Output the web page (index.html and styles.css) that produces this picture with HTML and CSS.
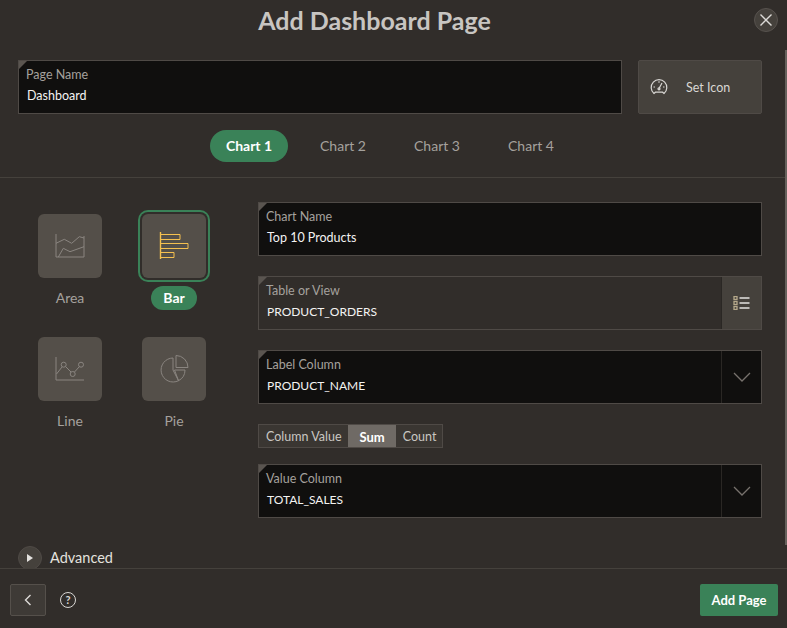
FILE: index.html
```html
<!DOCTYPE html>
<html lang="en">
<head>
  <meta charset="UTF-8" />
  <title>Add Dashboard Page</title>
  <meta name="viewport" content="width=device-width, initial-scale=1.0" />
  <link rel="stylesheet" href="styles.css">
</head>
<body>
  <div class="dialog">
    <header class="dialog-head">
      <h1>Add Dashboard Page</h1>
      <button class="close" type="button" aria-label="Close">
        <svg width="14" height="14" viewBox="0 0 14 14"><path d="M1.5 1.5l11 11M12.5 1.5l-11 11" /></svg>
      </button>
    </header>

    <div class="dialog-body">
      <div class="page-row">
        <div class="field grow">
          <label>Page Name</label>
          <div class="value">Dashboard</div>
        </div>
        <button class="set-icon" type="button">
          <svg width="18" height="18" viewBox="0 0 18 18">
            <path d="M4 15.5A7.8 7.8 0 1 1 14 15.5L12.6 14.2H5.4Z" />
            <path d="M9 10.5L12 5" />
            <circle cx="9" cy="10.8" r="1" />
            <path d="M3.5 9H5M13 9h1.5M9 3.3v1.4" />
          </svg>
          <span>Set Icon</span>
        </button>
      </div>

      <nav class="tabs">
        <a class="tab active">Chart 1</a>
        <a class="tab">Chart 2</a>
        <a class="tab">Chart 3</a>
        <a class="tab">Chart 4</a>
      </nav>

      <div class="chart-panel">
        <div class="types">
          <div class="type">
            <div class="tile">
              <svg width="30" height="28" viewBox="0 0 30 28">
                <path d="M1 2V25H29V4" />
                <path d="M1 11.300L9.300 7.300L16.700 11.300L24.300 4.700L29 6" />
                <path d="M3.300 25L8.300 16.300L15 19.700L29 14.700" />
              </svg>
            </div>
            <span class="type-name">Area</span>
          </div>
          <div class="type selected">
            <div class="tile">
              <svg width="30" height="28" viewBox="0 0 30 28">
                <path class="axis" d="M1.500 0v27" />
                <path d="M1.500 2.500h19.500v5h-19.500M1.500 11.500h27.500v5h-27.500M1.500 20.500h13.500v5h-13.500" />
              </svg>
            </div>
            <span class="type-name">Bar</span>
          </div>
          <div class="type">
            <div class="tile">
              <svg width="30" height="28" viewBox="0 0 30 28">
                <path d="M1 2V25H29" />
                <path d="M1.500 19L7 12M10.500 11.500L16 17M19.500 17L24.500 11.500" />
                <circle cx="8.700" cy="9.700" r="2.500" />
                <circle cx="17.700" cy="19" r="2.500" />
                <circle cx="26" cy="9.700" r="2.500" />
              </svg>
            </div>
            <span class="type-name">Line</span>
          </div>
          <div class="type">
            <div class="tile">
              <svg width="30" height="30" viewBox="0 0 30 30">
                <path d="M17 1.500v12h12A12 12 0 0 0 17 1.500Z" />
                <path d="M14 4A12 12 0 1 0 19.500 26.700L14 16Z" />
                <path d="M15.500 16H26A12 12 0 0 1 19.500 26.700Z" />
              </svg>
            </div>
            <span class="type-name">Pie</span>
          </div>
        </div>

        <div class="fields">
          <div class="field">
            <label>Chart Name</label>
            <div class="value">Top 10 Products</div>
          </div>
          <div class="field readonly">
            <label>Table or View</label>
            <div class="value caps">PRODUCT_ORDERS</div>
            <span class="addon">
              <svg width="18" height="14" viewBox="0 0 18 14">
                <path class="lines" d="M6.500 2h10M6.500 7h10M6.500 12h10" />
                <rect x="1" y="0.500" width="3" height="3" />
                <rect x="1" y="5.500" width="3" height="3" />
                <rect x="1" y="10.500" width="3" height="3" />
              </svg>
            </span>
          </div>
          <div class="field">
            <label>Label Column</label>
            <div class="value caps">PRODUCT_NAME</div>
            <span class="addon">
              <svg width="18" height="10" viewBox="0 0 18 10"><path d="M1 1l8 8 8-8" /></svg>
            </span>
          </div>
          <div class="segmented">
            <span>Column Value</span>
            <span class="on">Sum</span>
            <span>Count</span>
          </div>
          <div class="field">
            <label>Value Column</label>
            <div class="value caps">TOTAL_SALES</div>
            <span class="addon">
              <svg width="18" height="10" viewBox="0 0 18 10"><path d="M1 1l8 8 8-8" /></svg>
            </span>
          </div>
        </div>
      </div>

      <div class="advanced">
        <span class="toggle"><i></i></span>
        <span>Advanced</span>
      </div>
    </div>

    <footer class="dialog-foot">
      <button class="back" type="button" aria-label="Back">
        <svg width="8" height="12" viewBox="0 0 8 12"><path d="M6.500 1l-5 5 5 5" /></svg>
      </button>
      <span class="help">?</span>
      <button class="add" type="button">Add Page</button>
    </footer>
    <div class="scrollbar"></div>
  </div>
</body>
</html>
```

FILE: styles.css
```css
* {
  box-sizing: border-box;
}

html, body {
  margin: 0;
  padding: 0;
  height: 100%;
  overflow: hidden;
  background: #312d2a;
  font-family: 'Lato', 'Noto Sans', sans-serif;
}

button {
  font-family: inherit;
  cursor: pointer;
}

svg {
  display: block;
  fill: none;
  stroke: currentColor;
  stroke-width: 1;
}

.dialog {
  position: relative;
  display: flex;
  flex-direction: column;
  height: 628px;
}

.scrollbar {
  position: absolute;
  top: 50px;
  right: 0;
  width: 2px;
  height: 495px;
  background: #66615c;
}

.dialog-head {
  position: relative;
  flex: none;
  height: 42px;
  padding-right: 38px;
  text-align: center;
}

.dialog-head h1 {
  margin: 0;
  padding-top: 3px;
  font-size: 25px;
  line-height: 34px;
  font-weight: 700;
  color: #c8c5c1;
}

.close {
  position: absolute;
  top: 8px;
  right: 9px;
  display: flex;
  align-items: center;
  justify-content: center;
  width: 24px;
  height: 24px;
  padding: 0;
  border: 1px solid #57524e;
  border-radius: 50%;
  background: #45413c;
  color: #dcdad7;
}

.close svg {
  stroke-width: 1.4;
}

.dialog-body {
  flex: 1;
  min-height: 0;
  overflow: hidden;
  padding-top: 18px;
}

.page-row {
  display: flex;
  gap: 16px;
  margin: 0 25px 0 18px;
}

.grow {
  flex: 1;
}

.field {
  position: relative;
  height: 54px;
  padding: 6px 7px 0;
  border: 1px solid #4f4a46;
  background: #100f0e;
}

.field::before {
  content: "";
  position: absolute;
  top: 0;
  left: 0;
  border-style: solid;
  border-width: 8px 8px 0 0;
  border-color: #5a5550 transparent transparent transparent;
}

.field.readonly {
  background: #312d2a;
}

.field label {
  display: block;
  font-size: 12.500px;
  line-height: 16px;
  color: #a5a19d;
}

.field .value {
  margin-top: 4px;
  padding-left: 1px;
  font-size: 12.500px;
  line-height: 17px;
  color: #f4f3f2;
}

.field .caps {
  font-size: 12px;
}

.addon {
  position: absolute;
  top: 0;
  right: 0;
  bottom: 0;
  display: flex;
  align-items: center;
  justify-content: center;
  width: 40px;
  border-left: 1px solid #2a2724;
  color: #77726d;
}

.addon svg {
  stroke-width: 1.3;
}

.readonly .addon {
  background: #45413c;
  color: #e4e2df;
}

.readonly .addon rect {
  stroke: #b5a88a;
}

.set-icon {
  display: flex;
  align-items: center;
  flex: none;
  width: 124px;
  height: 54px;
  padding: 0 0 0 11px;
  border: 1px solid #4f4a46;
  border-radius: 2px;
  background: #45413c;
  color: #d9d7d4;
  font-size: 12.500px;
}

.set-icon svg {
  stroke-width: 1.2;
}

.set-icon span {
  margin-left: 18px;
}

.tabs {
  display: flex;
  justify-content: center;
  gap: 16px;
  height: 48px;
  margin-top: 16px;
  padding-right: 7px;
  border-bottom: 1px solid #45413c;
}

.tab {
  width: 78px;
  height: 32px;
  border-radius: 16px;
  font-size: 14px;
  line-height: 32px;
  text-align: center;
  color: #a5a19d;
}

.tab.active {
  background: #3a8258;
  color: #fff;
  font-weight: 700;
}

.chart-panel {
  display: flex;
  padding-top: 24px;
  margin-right: 25px;
}

.types {
  display: grid;
  grid-template-columns: 72px 72px;
  grid-auto-rows: 123px;
  column-gap: 32px;
  flex: none;
  width: 224px;
  margin: 8px 0 0 34px;
}

.type {
  display: flex;
  flex-direction: column;
  align-items: center;
}

.tile {
  display: flex;
  align-items: center;
  justify-content: center;
  width: 64px;
  height: 64px;
  margin-top: 4px;
  border-radius: 6px;
  background: #544f49;
  color: #8a8580;
}

.type-name {
  margin-top: 8px;
  height: 24px;
  padding: 0 12px;
  border-radius: 12px;
  font-size: 14px;
  line-height: 24px;
  color: #a5a19d;
}

.selected .tile {
  box-shadow: 0 0 0 2px #312d2a, 0 0 0 4px #3a8258;
  color: #f5c04f;
}

.selected .axis {
  stroke-width: 1.4;
}

.selected .type-name {
  background: #3a8258;
  color: #fff;
  font-weight: 700;
}

.fields {
  display: flex;
  flex-direction: column;
  gap: 20px;
  flex: 1;
}

.segmented {
  display: flex;
  align-self: flex-start;
  height: 24px;
  margin-bottom: -4px;
  border: 1px solid #4f4a46;
  background: #3a3632;
  font-size: 12.500px;
  line-height: 24px;
  color: #c9c6c2;
}

.segmented span {
  padding: 0 6px 0 7px;
}

.segmented .on {
  padding: 0 11px 0 12px;
  background: #6f6a65;
  color: #fff;
  font-size: 13px;
  font-weight: 700;
}

.advanced {
  display: flex;
  align-items: center;
  gap: 8px;
  margin: 28px 0 0 18px;
  font-size: 14.500px;
  line-height: 16px;
  color: #e4e2df;
}

.toggle {
  display: flex;
  align-items: center;
  justify-content: center;
  width: 24px;
  height: 24px;
  border: 1px solid #4f4a46;
  border-radius: 50%;
  background: #45413c;
}

.toggle i {
  border-style: solid;
  border-width: 4.500px 0 4.500px 6px;
  border-color: transparent transparent transparent #e4e2df;
}

.dialog-foot {
  display: flex;
  align-items: center;
  flex: none;
  height: 60px;
  padding: 3px 9px 0 10px;
  border-top: 1px solid #45413c;
}

.back {
  display: flex;
  align-items: center;
  justify-content: center;
  width: 36px;
  height: 32px;
  padding: 0;
  border: 1px solid #55504b;
  border-radius: 2px;
  background: #3e3a36;
  color: #dcdad7;
}

.back svg {
  stroke-width: 1.4;
}

.help {
  width: 16px;
  height: 16px;
  margin-left: 14px;
  border: 1.5px solid #d9d7d4;
  border-radius: 50%;
  font-size: 11px;
  line-height: 13px;
  font-weight: 700;
  text-align: center;
  color: #d9d7d4;
}

.add {
  width: 78px;
  height: 32px;
  margin-left: auto;
  padding: 0;
  border: 0;
  border-radius: 2px;
  background: #3a8258;
  color: #fff;
  font-size: 13px;
  font-weight: 700;
}
```
